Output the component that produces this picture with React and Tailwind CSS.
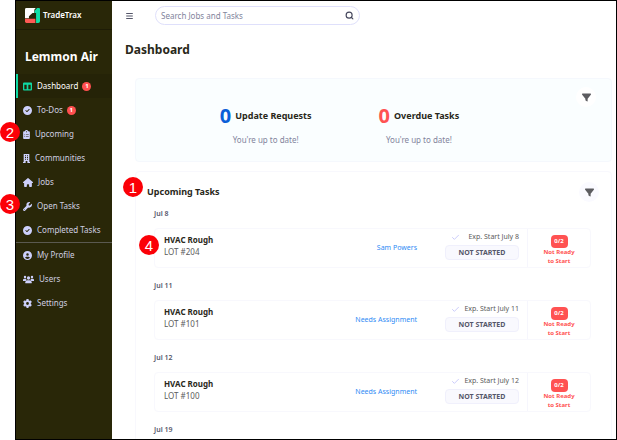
import React from 'react';
import { Check, Search } from 'lucide-react';
import {
  FaBars,
  FaCircleCheck,
  FaCircleUser,
  FaClipboardList,
  FaFilter,
  FaGear,
  FaHouse,
  FaWrench
} from 'react-icons/fa6';

const ColumnsIcon = ({ className }) => (
  <svg viewBox="0 0 27 24" className={className} fill="currentColor" aria-hidden="true">
    <path
      fillRule="evenodd"
      d="M3 0h21a3 3 0 0 1 3 3v18a3 3 0 0 1-3 3H3a3 3 0 0 1-3-3V3a3 3 0 0 1 3-3zM4 7v13h7V7zM16 7v13h7V7z"
    />
  </svg>
);

const BuildingIcon = ({ className }) => (
  <svg viewBox="0 0 21 27" className={className} fill="currentColor" aria-hidden="true">
    <path
      fillRule="evenodd"
      d="M2 0h17v24h2v3h-8v-6H8v6H0v-3h2zM6 4v3h3V4zM12 4v3h3V4zM6 9v3h3V9zM12 9v3h3V9zM6 14v3h3v-3zM12 14v3h3v-3z"
    />
  </svg>
);

const UsersIcon = ({ className }) => (
  <svg viewBox="0 0 33 27" className={className} fill="currentColor" aria-hidden="true">
    <circle cx="6" cy="6" r="3.6" />
    <circle cx="27" cy="6" r="3.6" />
    <circle cx="16.500" cy="9" r="5" />
    <path d="M0 18v-3a4 4 0 0 1 4-4h5a8 8 0 0 0 2 4 8 8 0 0 0-3 3zM33 18v-3a4 4 0 0 0-4-4h-5a8 8 0 0 1-2 4 8 8 0 0 1 3 3z" />
    <path d="M7 25v-3a6 6 0 0 1 6-6h7a6 6 0 0 1 6 6v3z" />
  </svg>
);

const mainLinks = [
  { name: 'Dashboard', icon: ColumnsIcon, width: 'w-[9px]', count: 1, active: true },
  { name: 'To-Dos', icon: FaCircleCheck, width: 'w-[9px]', count: 1 },
  { name: 'Upcoming', icon: FaClipboardList, width: 'w-[7px]', step: 2 },
  { name: 'Communities', icon: BuildingIcon, width: 'w-[7px]' },
  { name: 'Jobs', icon: FaHouse, width: 'w-[10px]' },
  { name: 'Open Tasks', icon: FaWrench, width: 'w-[9px]', step: 3 },
  { name: 'Completed Tasks', icon: FaCircleCheck, width: 'w-[9px]' }
];

const accountLinks = [
  { name: 'My Profile', icon: FaCircleUser, width: 'w-[9px]' },
  { name: 'Users', icon: UsersIcon, width: 'w-[11px]' },
  { name: 'Settings', icon: FaGear, width: 'w-[9px]' }
];

const days = [
  { date: 'Jul 8', lot: 'LOT #204', assignee: 'Sam Powers', start: 'July 8', step: 4 },
  { date: 'Jul 11', lot: 'LOT #101', assignee: 'Needs Assignment', start: 'July 11' },
  { date: 'Jul 12', lot: 'LOT #100', assignee: 'Needs Assignment', start: 'July 12' },
  { date: 'Jul 19' }
];

const Step = ({ number, className }) => (
  <span
    className={`absolute flex h-5 w-5 items-center justify-center rounded-full bg-[#fb0007] font-['Liberation_Sans',sans-serif] text-[15px] leading-none text-white ${className}`}
  >
    {number}
  </span>
);

const Logo = () => (
  <svg viewBox="0 0 42 42" className="h-[15px] w-[15px]" aria-hidden="true">
    <path d="M4 0h26l-4 5v9h-5L11 23v6H0V4a4 4 0 0 1 4-4z" fill="#fff" />
    <path d="M0 30h29v12H4a4 4 0 0 1-4-4z" fill="#ff5a55" />
    <path d="M27 8l7-8h5a3 3 0 0 1 3 3v34a5 5 0 0 1-5 5h-6V14h-4z" fill="#0fe0a8" />
  </svg>
);

const NavLink = ({ name, icon: Icon, width, count, active, step }) => (
  <li className="relative">
    <a
      href="#"
      className={`flex h-6 items-center border-l-2 pl-[5px] text-[8px] ${
        active ? 'border-[#0fd9a3] bg-[#252307] text-white' : 'border-transparent text-[#cfcfe0]'
      }`}
    >
      <Icon className={`h-[9px] shrink-0 ${width} ${active ? 'text-[#0fd9a3]' : 'text-[#cdd0fb]'}`} />
      <span className="ml-[5px]">{name}</span>
      {count && (
        <span className="ml-1 flex h-[9px] w-[9px] items-center justify-center rounded-full bg-[#ff4f4f] text-[6px] font-bold leading-none text-white">
          {count}
        </span>
      )}
    </a>
    {step && <Step number={step} className="top-0 -left-4" />}
  </li>
);

const Sidebar = () => (
  <nav className="w-24 shrink-0 bg-[#292708]">
    <div className="flex h-[29px] items-center gap-[3px] border-b border-[#1e1c06] pl-[9px] text-[8px] font-semibold text-white">
      <Logo />
      TradeTrax
    </div>
    <div className="flex h-11 items-center pt-2.5 pl-[9px] text-[12px] font-bold text-white">Lemmon Air</div>
    <ul>
      {mainLinks.map((link) => (
        <NavLink key={link.name} {...link} />
      ))}
    </ul>
    <ul className="border-t border-[#5a5950]">
      {accountLinks.map((link) => (
        <NavLink key={link.name} {...link} />
      ))}
    </ul>
  </nav>
);

const Summary = ({ count, title, color }) => (
  <div className="text-center">
    <div className="flex items-center justify-center gap-1">
      <span className={`text-[20px] leading-6 font-bold ${color}`}>{count}</span>
      <h2 className="text-[9px] font-bold text-[#29281a]">{title}</h2>
    </div>
    <p className="mt-1.5 text-[8px] leading-3 text-[#82849c]">You're up to date!</p>
  </div>
);

const FilterButton = ({ className }) => (
  <button type="button" aria-label="Filter" className={`flex h-5 w-5 items-center justify-center rounded-full ${className}`}>
    <FaFilter className="h-[9px] w-[9px] text-[#5c5c60]" />
  </button>
);

const TaskCard = ({ lot, assignee, start, step }) => (
  <div className="relative flex h-10 rounded border border-[#f8f8fd]">
    {step && <Step number={step} className="top-1.5 -left-4" />}
    <div className="flex-1 pt-[5px] pl-[9px]">
      <h3 className="text-[8px] leading-3 font-bold text-[#29281a]">HVAC Rough</h3>
      <p className="text-[8px] leading-3 text-[#5b5b5b]">{lot}</p>
    </div>
    <a href="#" className="mr-7 self-center text-[7px] text-[#2f8bf5]">
      {assignee}
    </a>
    <div className="mr-2 w-[74px] pt-0.5">
      <div className="flex items-center justify-between pl-1.5 text-[7px] leading-3 text-[#5b5b5b]">
        <Check className="h-[9px] w-[9px] text-[#b9bbf8]" />
        <span>Exp. Start {start}</span>
      </div>
      <div className="mt-0.5 h-[15px] rounded-sm border border-[#f0f0fc] bg-[#f9f9fe] text-center text-[7px] leading-[13px] font-bold text-[#55576a]">
        NOT STARTED
      </div>
    </div>
    <div className="flex w-[63px] flex-col items-center border-l border-[#f6f6fd] pt-1.5 text-[6px] leading-[9px] font-bold text-[#ff5252]">
      <span className="flex h-[13px] w-[17px] shrink-0 items-center justify-center rounded bg-[#ff5252] text-white">0/2</span>
      <span className="w-9 text-center">Not Ready to Start</span>
    </div>
  </div>
);

const App = () => {
  return (
    <div className="h-screen overflow-hidden bg-white pl-[15px] font-['Noto_Sans',sans-serif]">
      <div className="flex h-full border border-black">
        <Sidebar />
        <main className="flex min-w-0 flex-1 flex-col overflow-hidden pr-1">
          <header className="flex h-[29px] shrink-0 items-center pl-[14px]">
            <button type="button" aria-label="Menu" className="text-[#55576a]">
              <FaBars className="h-2 w-[7px]" />
            </button>
            <label className="ml-[22px] flex h-[19px] w-[205px] items-center rounded-full border border-[#dfe0fb] pr-[5px] pl-[5px]">
              <input
                type="text"
                aria-label="Search Jobs and Tasks"
                placeholder="Search Jobs and Tasks"
                className="min-w-0 flex-1 text-[8px] outline-none placeholder:text-[#82849c]"
              />
              <Search className="h-[9px] w-[9px] text-[#44465c]" strokeWidth={3} />
            </label>
          </header>
          <h1 className="mt-3 ml-[13px] text-[12px] leading-4 font-bold text-[#29281a]">Dashboard</h1>

          <section className="mt-5 ml-[23px] flex h-[84px] shrink-0 rounded border border-[#f5f8fd] bg-[#fafeff]">
            <div className="flex flex-1 items-start justify-center gap-[67px] pt-[25px] pr-[33px]">
              <Summary count={0} title="Update Requests" color="text-[#0b5fd8]" />
              <Summary count={0} title="Overdue Tasks" color="text-[#ff5252]" />
            </div>
            <FilterButton className="mt-2 mr-[15px] bg-white" />
          </section>

          <section className="mt-[9px] ml-[23px] flex-1 rounded border border-[#f8f8fd]">
            <div className="flex h-9 items-center justify-between pt-1 pr-3 pl-[11px]">
              <h2 className="text-[9px] font-bold text-[#29281a]">Upcoming Tasks</h2>
              <FilterButton className="bg-[#fafaff]" />
            </div>
            <ul className="pr-5 pl-[18px]">
              {days.map((day) => (
                <li key={day.date} className="h-[72px]">
                  <h3 className="h-5 text-[7px] leading-3 font-semibold text-[#55576a]">{day.date}</h3>
                  {day.lot && <TaskCard {...day} />}
                </li>
              ))}
            </ul>
          </section>
        </main>
      </div>
      <Step number={1} className="top-[177px] left-[123px]" />
    </div>
  );
};

export default App;
